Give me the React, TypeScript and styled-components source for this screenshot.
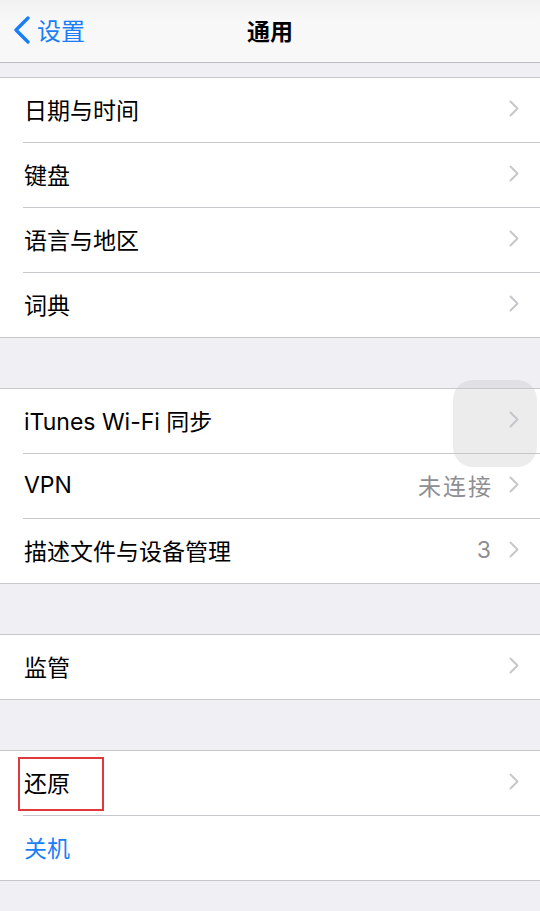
import React from "react";
import styled, { createGlobalStyle } from "styled-components";

const Global = createGlobalStyle`
  html, body { margin: 0; padding: 0; background: #efeff4; }
  body { font-family: Inter, "Noto Sans CJK SC", sans-serif; -webkit-font-smoothing: antialiased; }
  * { box-sizing: border-box; }
`;

const Page = styled.div`
  position: relative;
  width: 540px;
  min-height: 911px;
  background: #efeff4;
  overflow: hidden;
`;

const NavBar = styled.div`
  height: 63px;
  background: linear-gradient(#f1f1f1, #f8f8f8 35%);
  border-bottom: 1px solid #bcbcc0;
  display: grid;
  grid-template-columns: 1fr auto 1fr;
  align-items: center;
  padding-bottom: 3px;
`;

const Back = styled.div`
  display: flex;
  align-items: center;
  gap: 6px;
  padding-left: 13px;
  color: #1a7ff7;
  font-family: "Noto Sans CJK SC", sans-serif;
  font-size: 24px;
`;

const Title = styled.div`
  font-family: "Noto Sans CJK SC", sans-serif;
  font-size: 23px;
  font-weight: 700;
  color: #000;
`;

const Content = styled.div`
  display: flex;
  flex-direction: column;
  padding-top: 14px;
  gap: 50px;
`;

const Group = styled.div`
  background: #fff;
  border-top: 1px solid #c8c7cc;
  border-bottom: 1px solid #c8c7cc;
`;

const Row = styled.div`
  display: flex;
  padding-left: 23px;
  &:last-child > div {
    border-bottom: none;
    height: 64px;
  }
`;

const RowInner = styled.div`
  position: relative;
  flex: 1;
  height: 65px;
  display: flex;
  align-items: center;
  padding-left: 1px;
  padding-right: 21px;
  padding-bottom: 3px;
  border-bottom: 1px solid #c8c7cc;
`;

const Label = styled.span<{ $blue?: boolean }>`
  flex: 1;
  font-size: 23px;
  color: ${(p) => (p.$blue ? "#1a7ff7" : "#000")};
  white-space: nowrap;
`;

const Value = styled.span<{ $wide?: boolean }>`
  font-size: 23px;
  color: #8e8e93;
  margin-right: ${(p) => (p.$wide ? "16px" : "18px")};
  letter-spacing: ${(p) => (p.$wide ? "2px" : "0")};
`;

const Mark = styled.div`
  position: absolute;
  left: -5px;
  top: 6px;
  width: 86px;
  height: 54px;
  border: 2px solid #e0393b;
`;

const Assistive = styled.div`
  position: absolute;
  left: 453px;
  top: 380px;
  width: 84px;
  height: 87px;
  border-radius: 20px;
  background: rgba(196, 196, 200, 0.32);
`;

const Chevron = () => (
  <svg width="10" height="17" viewBox="0 0 10 17" fill="none">
    <path d="M1.5 1.5 L8.5 8.5 L1.5 15.5" stroke="#c7c7cc" strokeWidth="2" strokeLinecap="round" strokeLinejoin="round" />
  </svg>
);

const BackChevron = () => (
  <svg width="18" height="28" viewBox="0 0 18 28" fill="none">
    <path d="M15 2 L3 14 L15 26" stroke="#1a7ff7" strokeWidth="3.4" strokeLinecap="round" strokeLinejoin="round" />
  </svg>
);

type Item = { label: string; value?: string; chevron?: boolean; blue?: boolean; mark?: boolean };

const groups: Item[][] = [
  [
    { label: "日期与时间", chevron: true },
    { label: "键盘", chevron: true },
    { label: "语言与地区", chevron: true },
    { label: "词典", chevron: true },
  ],
  [
    { label: "iTunes Wi-Fi 同步", chevron: true },
    { label: "VPN", value: "未连接", chevron: true },
    { label: "描述文件与设备管理", value: "3", chevron: true },
  ],
  [{ label: "监管", chevron: true }],
  [
    { label: "还原", chevron: true, mark: true },
    { label: "关机", blue: true },
  ],
];

export default function App() {
  return (
    <Page>
      <Global />
      <NavBar>
        <Back>
          <BackChevron />
          <span>设置</span>
        </Back>
        <Title>通用</Title>
        <div />
      </NavBar>
      <Content>
        {groups.map((g, gi) => (
          <Group key={gi}>
            {g.map((it) => (
              <Row key={it.label}>
                <RowInner>
                  {it.mark && <Mark />}
                  <Label $blue={it.blue}>{it.label}</Label>
                  {it.value && <Value $wide={it.value.length > 1}>{it.value}</Value>}
                  {it.chevron && <Chevron />}
                </RowInner>
              </Row>
            ))}
          </Group>
        ))}
      </Content>
      <Assistive />
    </Page>
  );
}
